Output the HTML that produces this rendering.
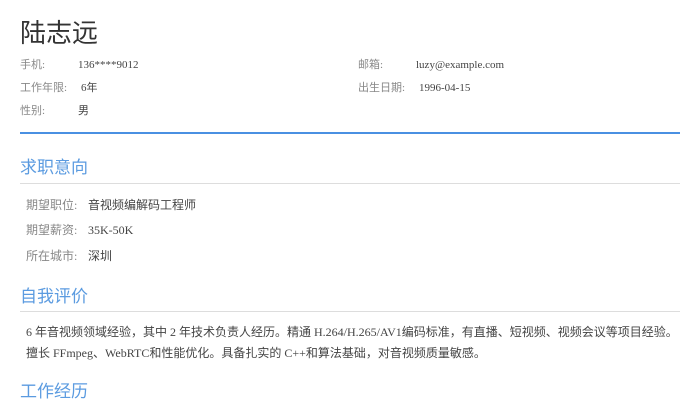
<!DOCTYPE html>
<html><head><meta charset="utf-8"><style>
body{margin:0;width:700px;height:400px;overflow:hidden;background:#fff;font-family:"Liberation Serif","Noto Sans CJK SC",serif;color:#444}
.a{position:absolute;white-space:nowrap;line-height:1}
.name{left:20px;top:20px;font-size:26px;color:#333;font-family:"Liberation Sans","Noto Sans CJK SC",sans-serif}
.s{font-size:11px}
.l{color:#888}
.h{font-size:17px;color:#5b9be0;font-family:"Liberation Sans","Noto Sans CJK SC",sans-serif}
.i{font-size:12px}
.line{position:absolute;left:20px;width:660px}
</style></head><body>
<div class="a name">陆志远</div>
<div class="a s l" style="left:20px;top:60px">手机:</div><div class="a s" style="left:78px;top:60px">136****9012</div>
<div class="a s l" style="left:20px;top:83px">工作年限:</div><div class="a s" style="left:81px;top:83px">6年</div>
<div class="a s l" style="left:20px;top:106px">性别:</div><div class="a s" style="left:78px;top:106px">男</div>
<div class="a s l" style="left:358px;top:60px">邮箱:</div><div class="a s" style="left:416px;top:60px">luzy@example.com</div>
<div class="a s l" style="left:358px;top:83px">出生日期:</div><div class="a s" style="left:419px;top:83px">1996-04-15</div>
<div class="line" style="top:132px;height:2px;background:#4a90e2"></div>
<div class="a h" style="left:20px;top:159px">求职意向</div>
<div class="line" style="top:183px;height:1px;background:#ddd"></div>
<div class="a i l" style="left:26px;top:199px">期望职位:</div><div class="a i" style="left:88px;top:199px">音视频编解码工程师</div>
<div class="a i l" style="left:26px;top:224px">期望薪资:</div><div class="a i" style="left:88px;top:224px">35K-50K</div>
<div class="a i l" style="left:26px;top:250px">所在城市:</div><div class="a i" style="left:88px;top:250px">深圳</div>
<div class="a h" style="left:20px;top:288px">自我评价</div>
<div class="line" style="top:311px;height:1px;background:#ddd"></div>
<div class="a i" style="left:26px;top:326px">6 年音视频领域经验，其中 2 年技术负责人经历。精通 H.264/H.265/AV1编码标准，有直播、短视频、视频会议等项目经验。</div>
<div class="a i" style="left:26px;top:347px">擅长 FFmpeg、WebRTC和性能优化。具备扎实的 C++和算法基础，对音视频质量敏感。</div>
<div class="a h" style="left:20px;top:383px">工作经历</div>
</body></html>
